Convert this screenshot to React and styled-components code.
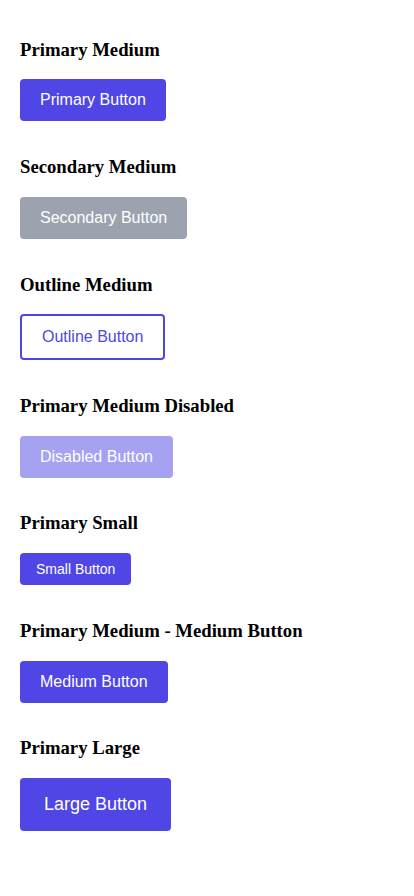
import React from 'react';
import styled, {createGlobalStyle, css} from 'styled-components';

const GlobalStyle = createGlobalStyle`
  body {
    margin: 0;
    background: #ffffff;
    font-family: "Liberation Serif", "Times New Roman", serif;
  }
`;

const Page = styled.div`
  display: flex;
  flex-direction: column;
  gap: 16px;
  padding: 20px;
`;

const Section = styled.section`
  display: block;
`;

const Title = styled.h3`
  margin: 18.72px 0;
  font-family: "Liberation Serif", "Times New Roman", serif;
  font-size: 18.72px;
  font-weight: bold;
  color: #000000;
`;

const sizes = {
  small: css`
    padding: 8px 16px;
    font-size: 14px;
  `,
  medium: css`
    padding: 12px 20px;
    font-size: 16px;
  `,
  large: css`
    padding: 16px 24px;
    font-size: 18px;
  `,
};

const variants = {
  primary: css`
    background: #4f46e5;
    color: #ffffff;
    border: none;
  `,
  secondary: css`
    background: #9ca3af;
    color: #ffffff;
    border: none;
  `,
  outline: css`
    background: #ffffff;
    color: #4f46e5;
    border: 2px solid #4f46e5;
  `,
};

const Button = styled.button`
  display: inline-block;
  font-family: "Liberation Sans", Arial, sans-serif;
  line-height: normal;
  border-radius: 4px;
  cursor: pointer;
  ${(props) => sizes[props.size || 'medium']}
  ${(props) => variants[props.variant || 'primary']}

  &:disabled {
    opacity: 0.5;
    cursor: not-allowed;
  }
`;

const demos = [
  {title: 'Primary Medium', label: 'Primary Button', variant: 'primary', size: 'medium'},
  {title: 'Secondary Medium', label: 'Secondary Button', variant: 'secondary', size: 'medium'},
  {title: 'Outline Medium', label: 'Outline Button', variant: 'outline', size: 'medium'},
  {title: 'Primary Medium Disabled', label: 'Disabled Button', variant: 'primary', size: 'medium', disabled: true},
  {title: 'Primary Small', label: 'Small Button', variant: 'primary', size: 'small'},
  {title: 'Primary Medium - Medium Button', label: 'Medium Button', variant: 'primary', size: 'medium'},
  {title: 'Primary Large', label: 'Large Button', variant: 'primary', size: 'large'},
];

export default function App() {
  return (
    <>
      <GlobalStyle />
      <Page>
        {demos.map((demo) => (
          <Section key={demo.title}>
            <Title>{demo.title}</Title>
            <Button variant={demo.variant} size={demo.size} disabled={demo.disabled}>
              {demo.label}
            </Button>
          </Section>
        ))}
      </Page>
    </>
  );
}
